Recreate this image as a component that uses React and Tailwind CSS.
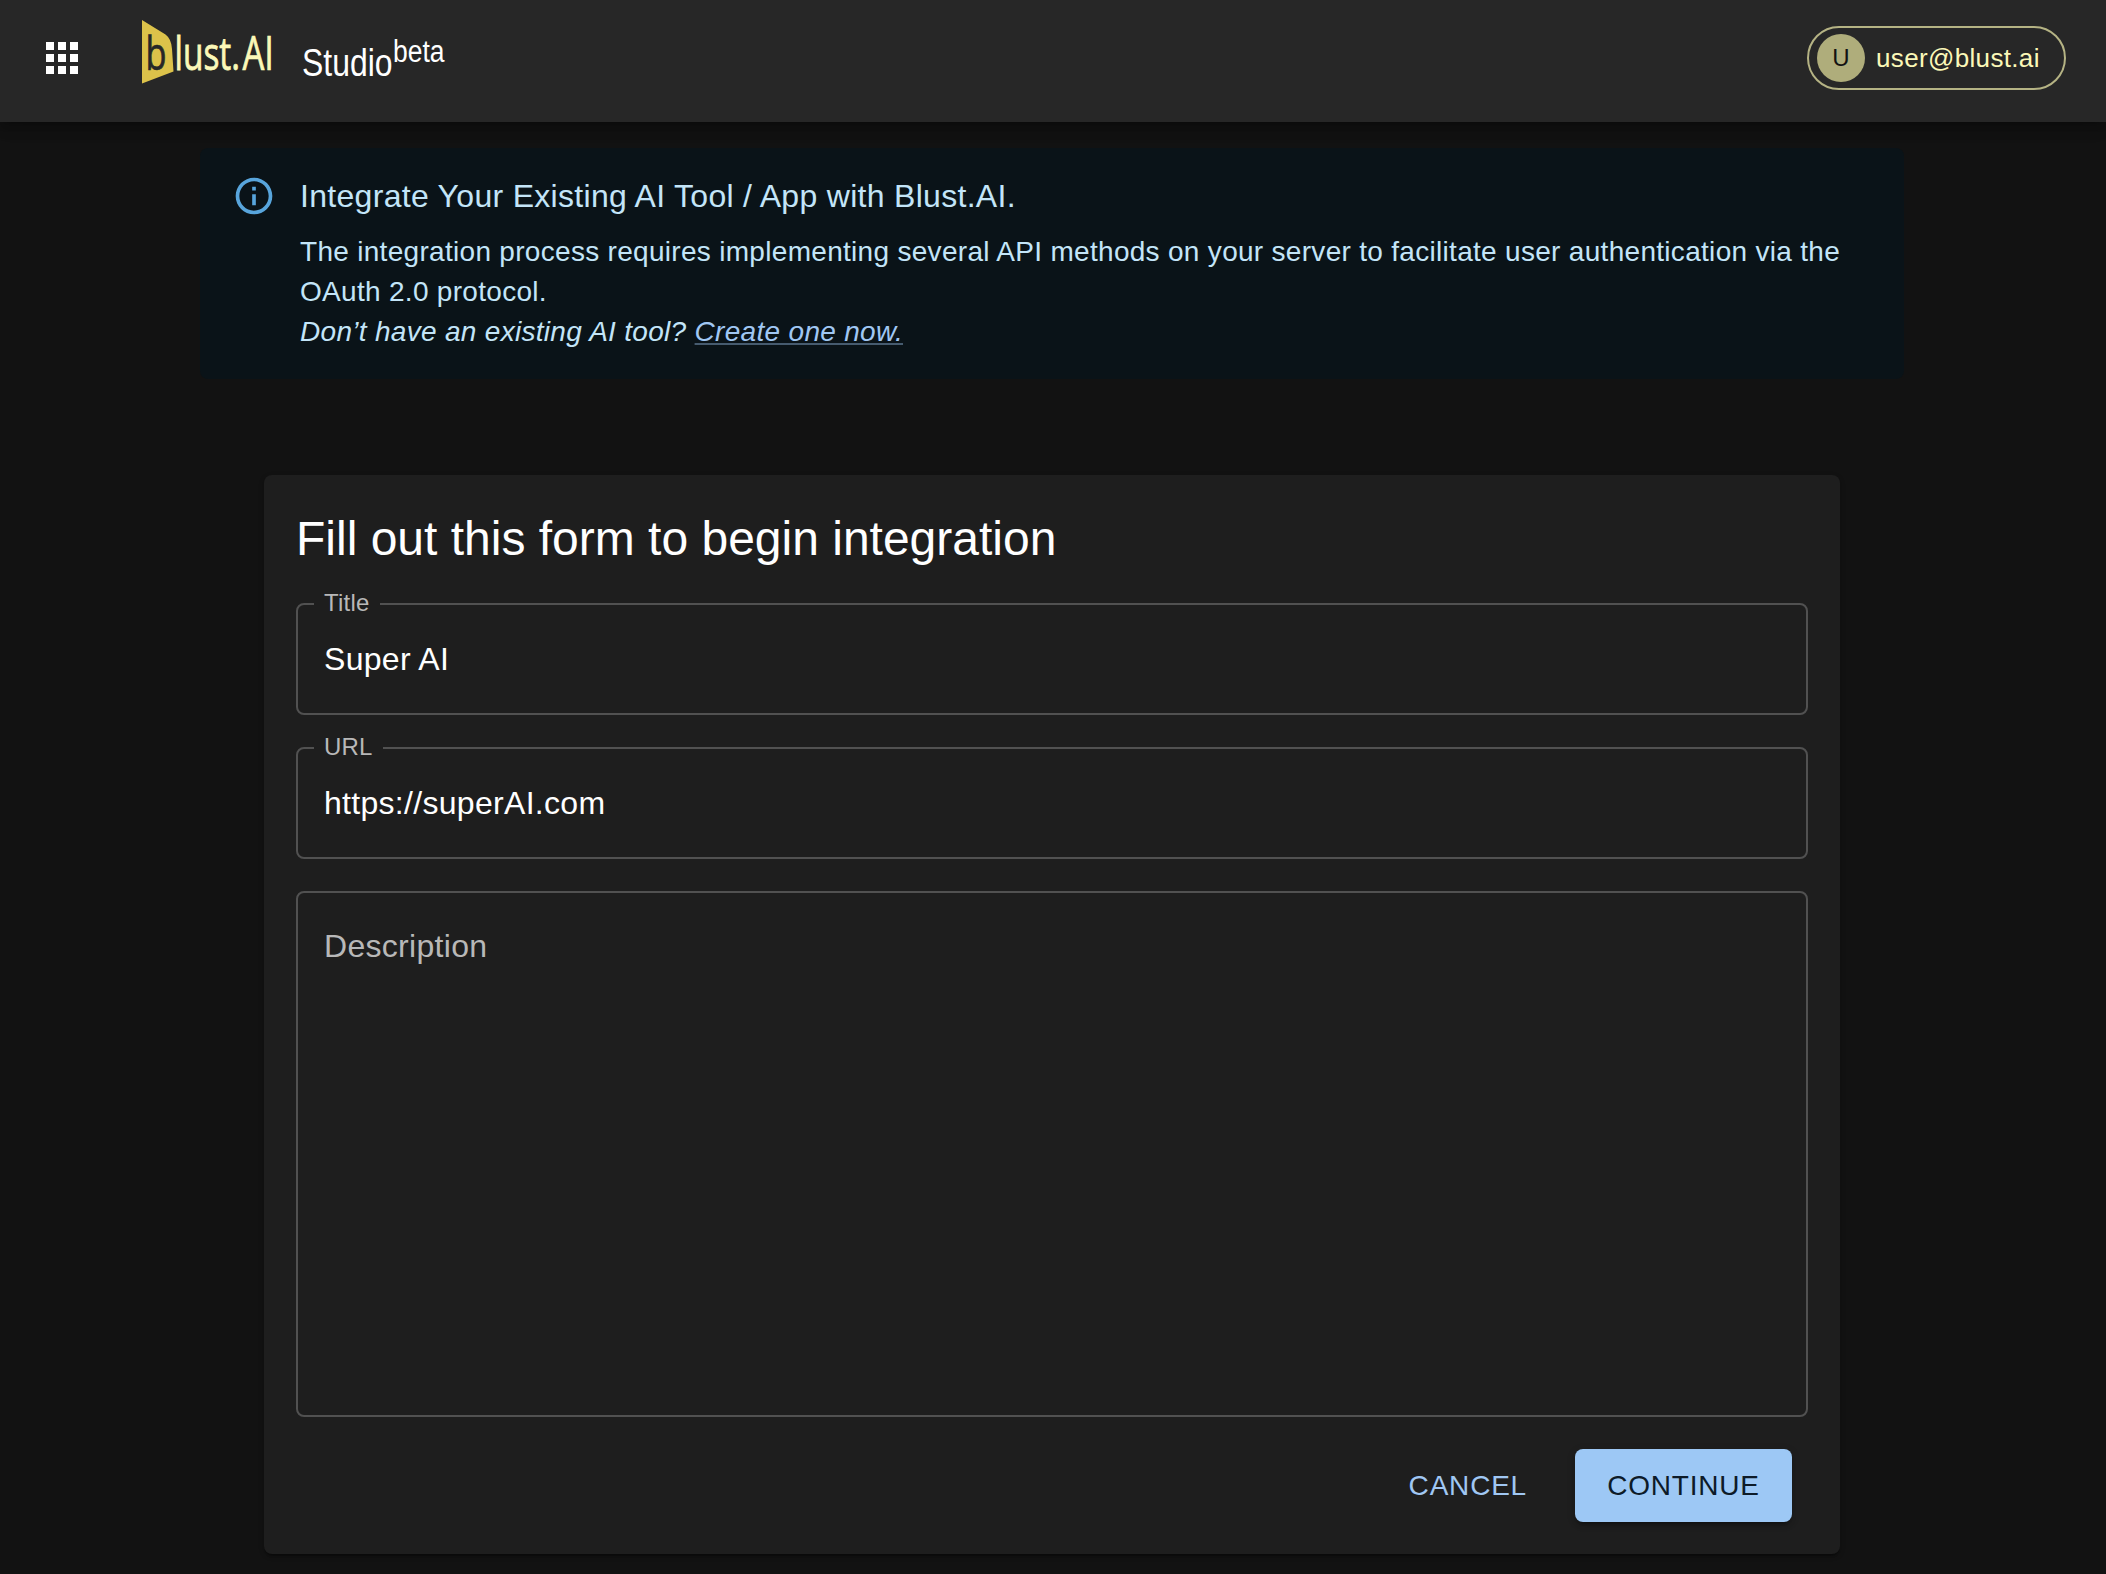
import React from "react";

function AppsIcon() {
  return (
    <span className="grid grid-cols-3 gap-1">
      {Array.from({ length: 9 }, (_, i) => (
        <span key={i} className="size-2 bg-white" />
      ))}
    </span>
  );
}

function Logo() {
  return (
    <svg className="overflow-visible" width="310" height="72" viewBox="0 0 310 72" role="img" aria-label="blust.AI Studio beta">
      <path d="M2 2 L25.500 16.500 Q31.500 21 32 31 L33.500 53.500 L2 65.500 Z" fill="#dcc24a" />
      <text x="5.500" y="51.500" fontSize="45" textLength="21" lengthAdjust="spacingAndGlyphs" fill="#272727" stroke="#272727" strokeWidth="0.700" fontFamily="'Open Sans', sans-serif">b</text>
      <text x="34.500" y="52.300" fontSize="45" textLength="65.500" lengthAdjust="spacingAndGlyphs" fill="#fbf8b8" stroke="#fbf8b8" strokeWidth="0.800" fontFamily="'Open Sans', sans-serif">lust.</text>
      <text x="102.500" y="52.300" fontSize="48" textLength="31.500" lengthAdjust="spacingAndGlyphs" fill="#fbf8b8" stroke="#fbf8b8" strokeWidth="0.700" fontFamily="'Open Sans', sans-serif">AI</text>
      <text x="162" y="58" fontSize="38" textLength="90.500" lengthAdjust="spacingAndGlyphs" fill="#fff" fontFamily="'Liberation Sans', Arial, sans-serif">Studio</text>
      <text x="253" y="44" fontSize="31" textLength="51.500" lengthAdjust="spacingAndGlyphs" fill="#fff" fontFamily="'Liberation Sans', Arial, sans-serif">beta</text>
    </svg>
  );
}

function Header() {
  return (
    <header className="flex h-[122px] items-start justify-between bg-[#272727] pr-10 pl-[46px] shadow-[0_4px_8px_-2px_rgba(0,0,0,0.2),0_8px_10px_rgba(0,0,0,0.14),0_2px_20px_rgba(0,0,0,0.12)]">
      <div className="flex items-start">
        <button className="mt-[42px] mr-[62px]" aria-label="Apps">
          <AppsIcon />
        </button>
        <div className="mt-[18px]">
          <Logo />
        </div>
      </div>
      <button className="mt-[26px] flex h-16 w-[259px] items-center rounded-full border-2 border-[#b5b384] pl-2 text-[26px] tracking-[0.34px] text-[#fbf8b8]">
        <span className="mr-[11px] flex size-12 items-center justify-center rounded-full bg-[#afad7b] text-2xl text-[#121212]">U</span>
        user@blust.ai
      </button>
    </header>
  );
}

function InfoIcon() {
  return (
    <svg className="mt-[26px] mr-6 size-11 shrink-0" viewBox="0 0 24 24" fill="#58a5dc">
      <path d="M11 7h2v2h-2zm0 4h2v6h-2zm1-9C6.480 2 2 6.480 2 12s4.480 10 10 10 10-4.480 10-10S17.520 2 12 2m0 18c-4.410 0-8-3.590-8-8s3.590-8 8-8 8 3.590 8 8-3.590 8-8 8" />
    </svg>
  );
}

function InfoAlert() {
  return (
    <section className="mx-auto mt-[26px] flex h-[231px] w-[1704px] rounded-lg bg-[#0a1318] px-8 text-[#c3e5f8]">
      <InfoIcon />
      <div className="pt-6 text-[28px] leading-10 tracking-[0.3px]">
        <h2 className="mb-3 text-[32px] leading-[48px]">Integrate Your Existing AI Tool / App with Blust.AI.</h2>
        <p>
          The integration process requires implementing several API methods on your server to facilitate user authentication via the
          <br />
          OAuth 2.0 protocol.
        </p>
        <p className="italic">
          Don’t have an existing AI tool?{" "}
          <a className="text-[#a0c7f3] underline decoration-[#a0c7f3]/40 decoration-2 underline-offset-2" href="#create">
            Create one now.
          </a>
        </p>
      </div>
    </section>
  );
}

function TextField({ label, value }) {
  return (
    <div className="relative h-28 rounded-lg border-2 border-[#515151] px-[26px] pt-[31px]">
      <span className="absolute -top-[17px] left-4 bg-[#1e1e1e] px-[10px] text-2xl leading-[30px] tracking-[0.23px] text-[#b8b8b8]">{label}</span>
      <div className="text-[32px] leading-[46px] tracking-[0.3px] text-white">{value}</div>
    </div>
  );
}

export default function App() {
  return (
    <div className="h-[1574px] overflow-hidden bg-[#121212] font-['Liberation_Sans',Arial,sans-serif]">
      <Header />
      <div className="pr-0.5">
        <InfoAlert />
        <main className="mx-auto mt-24 h-[1079px] w-[1576px] rounded-lg bg-[#1e1e1e] px-8 pt-8 shadow-[0_4px_2px_-2px_rgba(0,0,0,0.2),0_2px_2px_rgba(0,0,0,0.14),0_2px_6px_rgba(0,0,0,0.12)]">
          <h1 className="text-5xl leading-[64px] text-white">Fill out this form to begin integration</h1>
          <div className="mt-8 flex flex-col gap-8">
            <TextField label="Title" value="Super AI" />
            <TextField label="URL" value="https://superAI.com" />
            <div className="h-[526px] rounded-lg border-2 border-[#515151] px-[26px] pt-[30px] text-[32px] leading-[46px] tracking-[0.3px] text-[#b8b8b8]">
              Description
            </div>
          </div>
          <div className="mt-8 flex h-[73px] justify-end gap-4 pr-4 text-[28px] tracking-[0.8px]">
            <button className="px-8 text-[#a0c7f3]">CANCEL</button>
            <button className="w-[217px] rounded-lg bg-[#9dc8f5] text-[#0d1b28] shadow-[0_6px_2px_-4px_rgba(0,0,0,0.2),0_4px_4px_rgba(0,0,0,0.14),0_2px_10px_rgba(0,0,0,0.12)]">
              CONTINUE
            </button>
          </div>
        </main>
      </div>
    </div>
  );
}
